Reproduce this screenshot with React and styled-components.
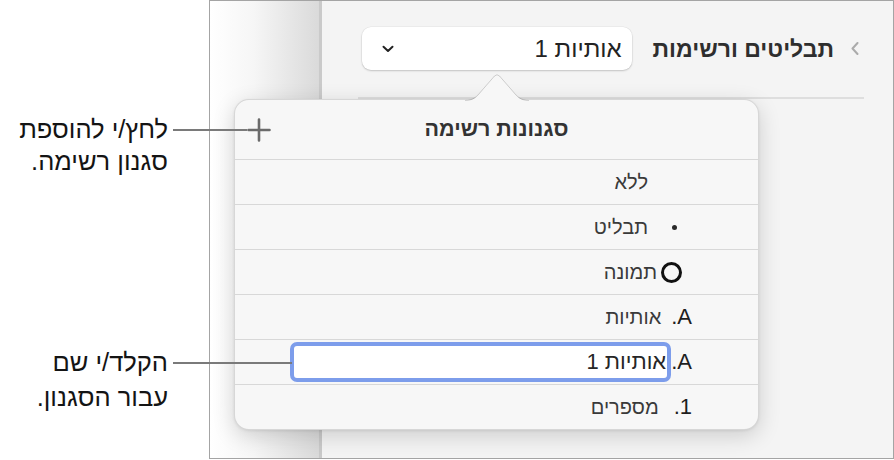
import React from 'react';
import styled, { createGlobalStyle } from 'styled-components';

const GlobalStyle = createGlobalStyle`
  html, body {
    margin: 0;
    padding: 0;
    background: #ffffff;
  }
  body {
    font-family: "Liberation Sans", "DejaVu Sans", sans-serif;
  }
`;

const Page = styled.div`
  position: relative;
  width: 894px;
  height: 460px;
  display: flex;
  overflow: hidden;
`;

const Notes = styled.div`
  position: relative;
  width: 209px;
  flex-shrink: 0;
  z-index: 2;
`;

const Callout = styled.div`
  position: absolute;
  top: ${p => p.$top}px;
  right: 41px;
  direction: rtl;
  text-align: right;
  font-size: 25.5px;
  line-height: ${p => p.$lh}px;
  color: #141414;
  white-space: nowrap;
`;

const Leader = styled.span`
  position: absolute;
  top: ${p => p.$y}px;
  left: calc(100% + 5px);
  width: ${p => p.$reach}px;
  height: 2px;
  background: #7a7a7a;
`;

const Frame = styled.div`
  position: relative;
  z-index: 1;
  width: 685px;
  height: 459px;
  box-sizing: border-box;
  border: 1px solid #a4a4a4;
  display: flex;
`;

const Sidebar = styled.div`
  width: 109px;
  flex-shrink: 0;
  border-right: 3px solid #cacaca;
  background: linear-gradient(to right, #ffffff 0%, #f6f6f6 40%, #dadada 100%);
`;

const Main = styled.div`
  flex: 1;
  background: #f4f4f4;
  direction: rtl;
  display: flex;
  flex-direction: column;
`;

const Header = styled.div`
  display: flex;
  align-items: center;
  padding: 26px 34px 0 0;
  height: 43px;
`;

const Back = styled.span`
  display: flex;
  margin-left: 17px;
`;

const Title = styled.div`
  font-size: 23px;
  font-weight: bold;
  color: #2e2e2e;
  margin-left: 21px;
  padding-top: 2px;
`;

const Dropdown = styled.div`
  width: 270px;
  height: 43px;
  box-sizing: border-box;
  background: #ffffff;
  border-radius: 9px;
  box-shadow: 0 1px 2px rgba(0, 0, 0, 0.18), 0 0 0 0.5px rgba(0, 0, 0, 0.06);
  display: flex;
  align-items: center;
  justify-content: space-between;
  padding: 0 10px 0 20px;
  font-size: 24px;
  color: #232323;
`;

const Rule = styled.div`
  height: 2px;
  background: #dedede;
  margin: 27px 29px 0 36px;
`;

const Popover = styled.div`
  position: absolute;
  left: 24px;
  top: 98px;
  width: 525px;
  height: 331px;
  box-sizing: border-box;
  background: #f7f7f7;
  border: 1px solid rgba(0, 0, 0, 0.13);
  border-radius: 15px;
  box-shadow: 0 6px 22px rgba(0, 0, 0, 0.16), 0 1px 3px rgba(0, 0, 0, 0.08);
  direction: rtl;
  display: flex;
  flex-direction: column;
`;

const Arrow = styled.svg`
  position: absolute;
  top: -28px;
  right: 229px;
  overflow: visible;
`;

const PopHeader = styled.div`
  height: 59px;
  display: grid;
  grid-template-columns: 1fr auto 1fr;
  align-items: center;
`;

const PopTitle = styled.div`
  grid-column: 2;
  font-size: 21.5px;
  font-weight: bold;
  color: #333333;
`;

const AddButton = styled.span`
  grid-column: 3;
  justify-self: end;
  display: flex;
  margin-left: 12px;
`;

const Row = styled.div`
  height: 45px;
  box-sizing: border-box;
  border-top: 1px solid #d8d8d8;
  display: flex;
  align-items: center;
  padding-right: ${p => p.$inset}px;
  gap: ${p => p.$gap || 0}px;
  font-size: 20px;
  color: #3a3a3a;
`;

const Dot = styled.span`
  width: 5px;
  height: 5px;
  border-radius: 50%;
  background: #2a2a2a;
`;

const Ring = styled.span`
  width: 21px;
  height: 21px;
  box-sizing: border-box;
  border: 3px solid #111111;
  border-radius: 50%;
`;

const Mark = styled.span`
  font-size: 22px;
  color: #1e1e1e;
`;

const NameField = styled.div`
  width: 381px;
  height: 40px;
  box-sizing: border-box;
  border: 4px solid #7d9deb;
  border-radius: 7px;
  background: #ffffff;
  display: flex;
  align-items: center;
  padding-right: 1px;
  font-size: 22px;
  color: #262626;
`;

const styles = [
  { key: 'none', label: 'ללא', inset: 110 },
  { key: 'bullet', label: 'תבליט', inset: 81, gap: 24, mark: <Dot /> },
  { key: 'image', label: 'תמונה', inset: 76, gap: 4, mark: <Ring /> },
  { key: 'letters', label: 'אותיות', inset: 66, gap: 10, mark: <Mark>A.</Mark> },
  { key: 'edit', inset: 66, mark: <Mark>A.</Mark>, edit: 'אותיות 1' },
  { key: 'numbers', label: 'מספרים', inset: 66, gap: 15, mark: <Mark>1.</Mark> },
];

export default function App() {
  return (
    <>
      <GlobalStyle />
      <Page>
        <Notes>
          <Callout $top={113} $lh={32}>
            לחץ/י להוספת
            <br />
            סגנון רשימה.
            <Leader $y={16} $reach={74} />
          </Callout>
          <Callout $top={345} $lh={35}>
            הקלד/י שם
            <br />
            עבור הסגנון.
            <Leader $y={17} $reach={119} />
          </Callout>
        </Notes>

        <Frame>
          <Sidebar />
          <Main>
            <Header>
              <Back>
                <svg width="8" height="13" viewBox="0 0 8 13">
                  <path d="M6.5 1L1.5 6.5L6.5 12" fill="none" stroke="#ababab" strokeWidth="2" strokeLinecap="round" strokeLinejoin="round" />
                </svg>
              </Back>
              <Title>תבליטים ורשימות</Title>
              <Dropdown>
                <span>אותיות 1</span>
                <svg width="12" height="8" viewBox="0 0 12 8">
                  <path d="M1.5 1.8L6 6L10.5 1.8" fill="none" stroke="#222" strokeWidth="2" strokeLinecap="round" strokeLinejoin="round" />
                </svg>
              </Dropdown>
            </Header>
            <Rule />
          </Main>

          <Popover>
            <Arrow width="64" height="30" viewBox="0 0 64 30">
              <path d="M0 29 C8 29 12 25 16 20 L29.5 4.5 Q32 2 34.5 4.5 L48 20 C52 25 56 29 64 29 L64 30 L0 30 Z" fill="#f7f7f7" />
              <path d="M0 28.5 C8 28.5 12 24.5 16 19.5 L29.5 4 Q32 1.5 34.5 4 L48 19.5 C52 24.5 56 28.5 64 28.5" fill="none" stroke="rgba(0,0,0,0.16)" strokeWidth="1" />
            </Arrow>
            <PopHeader>
              <PopTitle>סגנונות רשימה</PopTitle>
              <AddButton>
                <svg width="24" height="24" viewBox="0 0 24 24">
                  <path d="M12 1.5V22.5M1.5 12H22.5" stroke="#6b6b6b" strokeWidth="2.6" strokeLinecap="round" />
                </svg>
              </AddButton>
            </PopHeader>
            {styles.map(s => (
              <Row key={s.key} $inset={s.inset} $gap={s.gap}>
                {s.mark}
                {s.edit ? <NameField>{s.edit}</NameField> : <span>{s.label}</span>}
              </Row>
            ))}
          </Popover>
        </Frame>
      </Page>
    </>
  );
}
